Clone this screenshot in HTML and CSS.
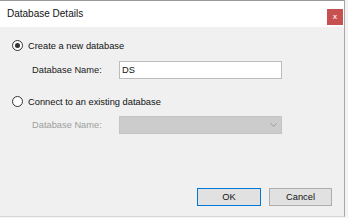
FILE: index.html
```html
<!DOCTYPE html>
<html>
<head>
<meta charset="utf-8">
<link rel="stylesheet" href="styles.css">
</head>
<body>
<div class="window">
  <div class="titlebar">
    <span class="title">Database Details</span>
    <span class="close">x</span>
  </div>
  <div class="content">
    <div class="radio-row first">
      <span class="radio checked"><span class="dot"></span></span>
      <span class="radio-label">Create a new database</span>
    </div>
    <div class="field-row">
      <span class="field-label">Database Name:</span>
      <div class="input">DS</div>
    </div>
    <div class="radio-row second">
      <span class="radio"></span>
      <span class="radio-label">Connect to an existing database</span>
    </div>
    <div class="field-row disabled">
      <span class="field-label">Database Name:</span>
      <div class="select">
        <svg class="chev" width="7" height="4" viewBox="0 0 7 4"><path d="M0.5 0.5 L3.5 3.3 L6.5 0.5" fill="none" stroke="#9a9a9a" stroke-width="1"/></svg>
      </div>
    </div>
    <div class="buttons">
      <div class="btn ok">OK</div>
      <div class="btn">Cancel</div>
    </div>
  </div>
</div>
</body>
</html>
```

FILE: styles.css
```css
html, body {
  margin: 0;
  padding: 0;
}
body {
  width: 348px;
  height: 218px;
  background: #f3f3f3;
  font-family: "Liberation Sans", Arial, sans-serif;
  color: #1a1a1a;
  overflow: hidden;
}
.window {
  width: 344px;
  height: 215px;
  background: #f0f0f0;
  border-top: 1px solid #9a9a9a;
  border-right: 1px solid #a8a8a8;
  border-bottom: 1px solid #d6d6d6;
  display: flex;
  flex-direction: column;
}
.titlebar {
  height: 26px;
  background: #ffffff;
  display: flex;
  align-items: flex-start;
  justify-content: space-between;
  padding-left: 7px;
  padding-right: 1px;
}
.title {
  font-size: 10px;
  line-height: 26px;
  color: #111;
}
.close {
  margin-top: 8px;
  width: 16px;
  height: 16px;
  background: #c75050;
  color: #f4dede;
  font-size: 8px;
  font-weight: bold;
  line-height: 15px;
  text-align: center;
}
.content {
  flex: 1;
  display: flex;
  flex-direction: column;
  padding: 0 12px 10px 12px;
  font-size: 9.3px;
}
.radio-row {
  display: flex;
  align-items: center;
  height: 11px;
}
.radio-row.first {
  margin-top: 13px;
}
.radio-row.second {
  margin-top: 17px;
}
.radio {
  width: 9px;
  height: 9px;
  border: 1px solid #333;
  border-radius: 50%;
  background: #fff;
  display: flex;
  align-items: center;
  justify-content: center;
  flex: none;
}
.dot {
  width: 5px;
  height: 5px;
  border-radius: 50%;
  background: #333;
}
.radio-label {
  margin-left: 5px;
  color: #111;
}
.field-row {
  display: flex;
  align-items: center;
  margin-top: 10px;
  padding-left: 20px;
}
.field-row.disabled {
  margin-top: 9px;
}
.field-label {
  width: 87px;
  flex: none;
}
.disabled .field-label {
  color: #9d9d9d;
}
.input {
  width: 159px;
  height: 16px;
  border: 1px solid #bcbcbc;
  background: #fff;
  padding-left: 2px;
  line-height: 16px;
  color: #111;
}
.select {
  width: 161px;
  height: 16px;
  border: 1px solid #c4c4c4;
  background: #cccccc;
  display: flex;
  align-items: center;
  justify-content: flex-end;
}
.chev {
  margin-right: 4px;
}
.buttons {
  margin-top: auto;
  display: flex;
  justify-content: flex-end;
  gap: 8px;
}
.btn {
  width: 61px;
  height: 16px;
  border: 1px solid #adadad;
  background: #e1e1e1;
  text-align: center;
  line-height: 16px;
  color: #111;
}
.btn.ok {
  width: 62px;
  border-color: #0078d7;
}
```
